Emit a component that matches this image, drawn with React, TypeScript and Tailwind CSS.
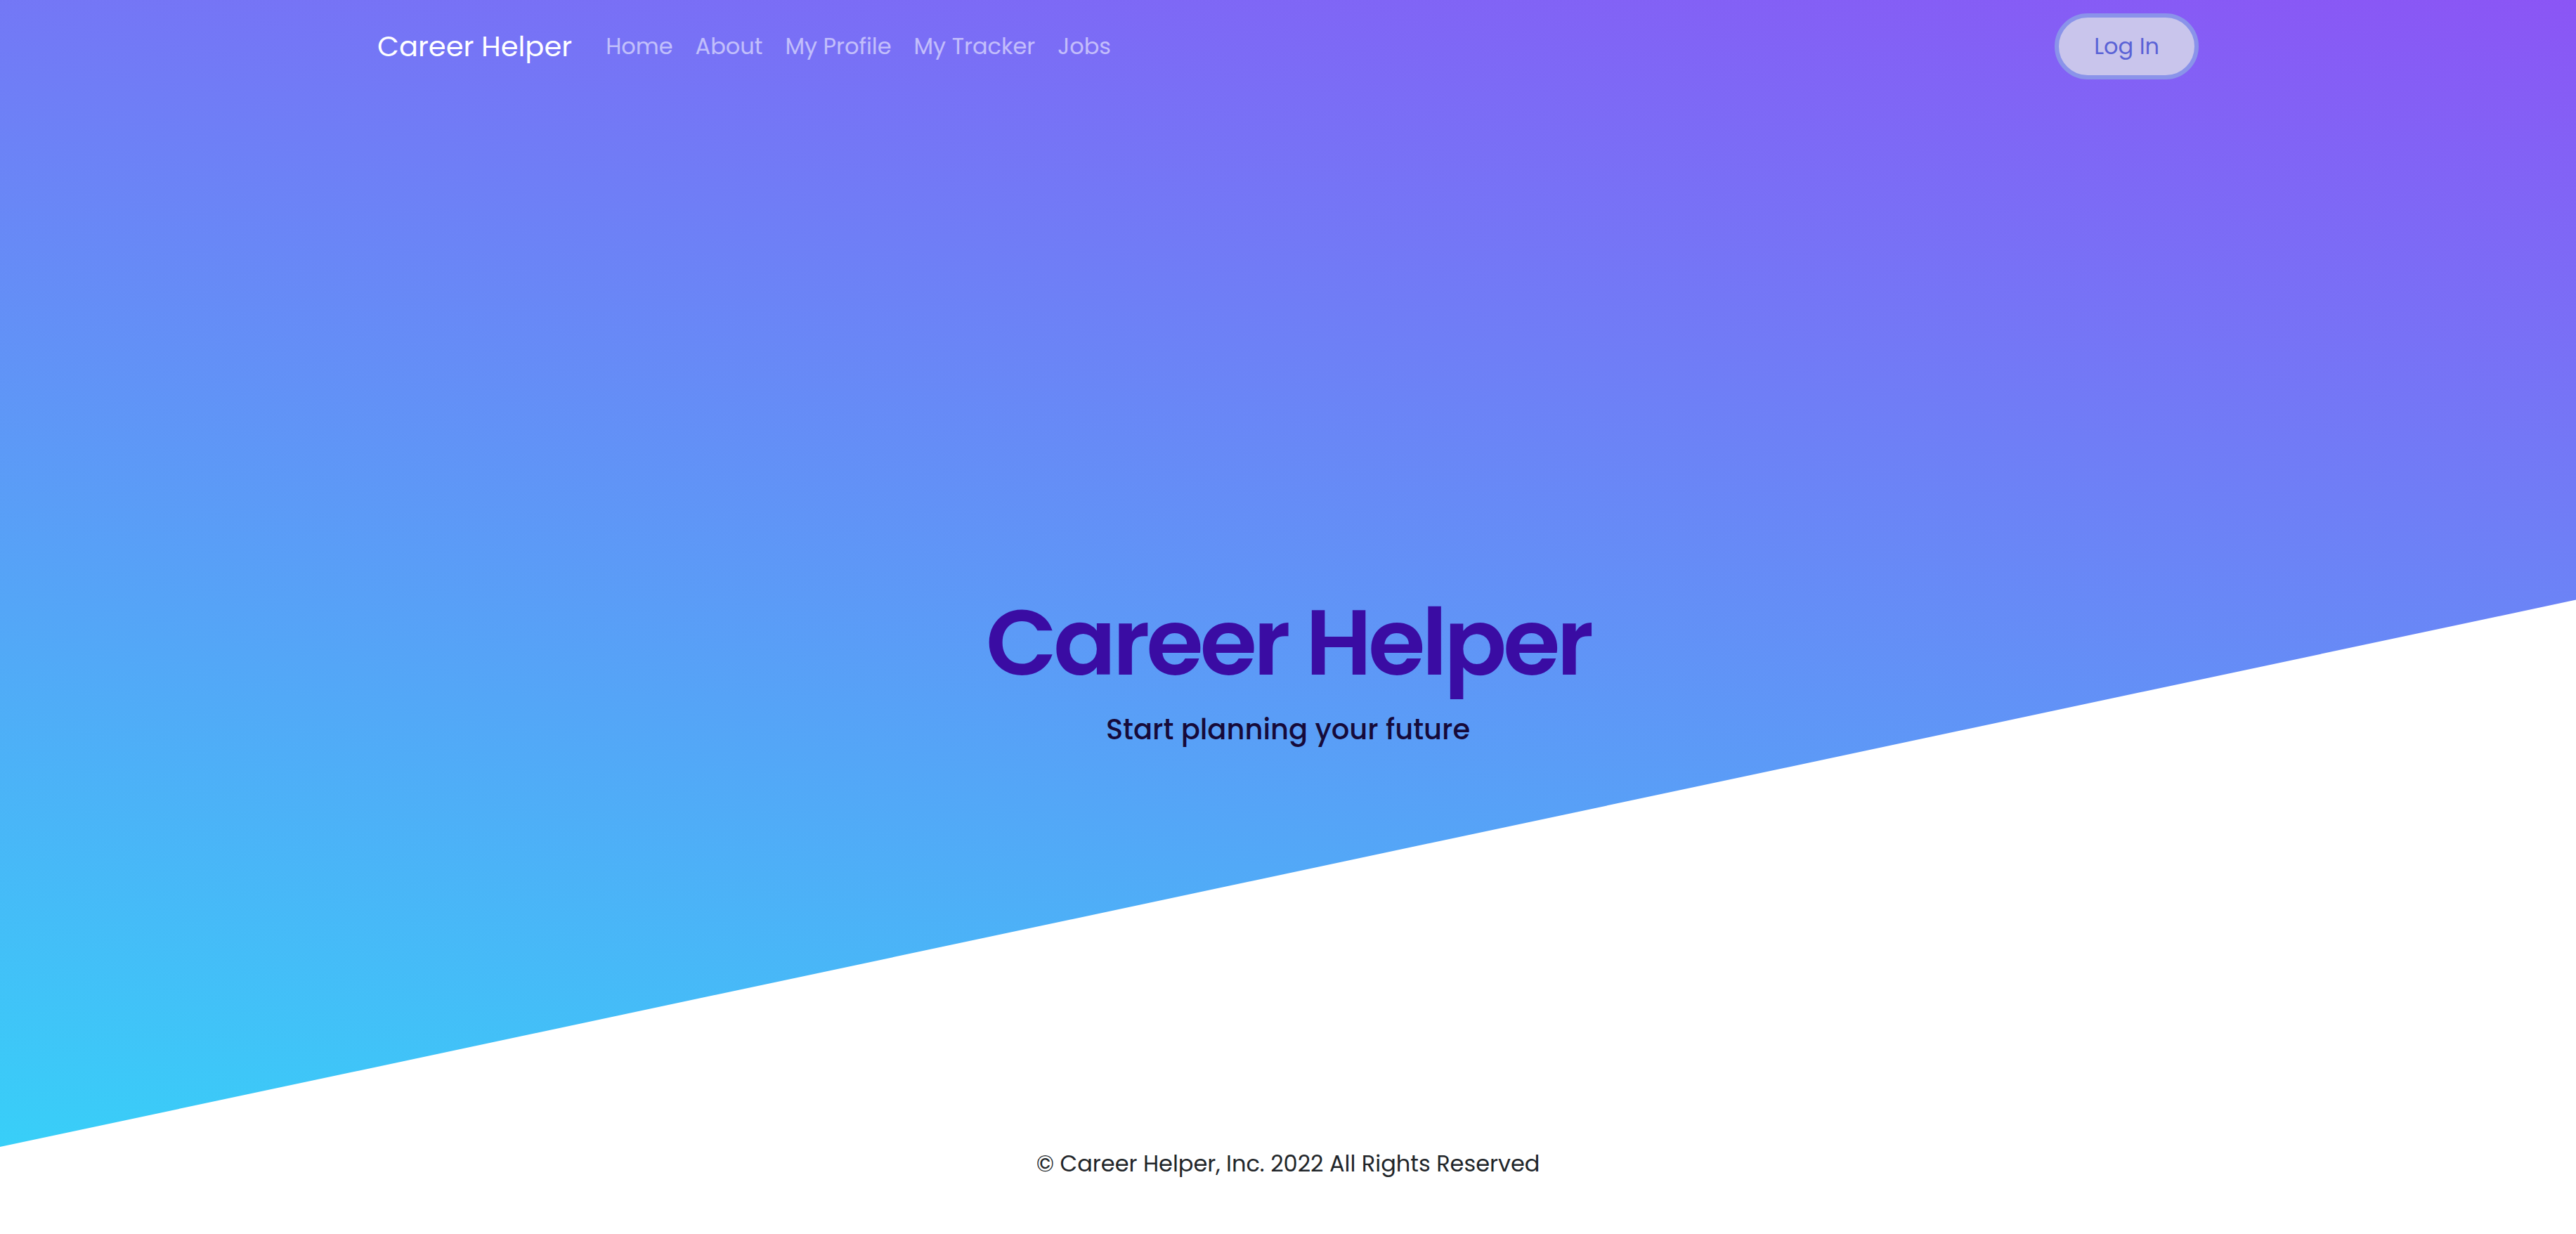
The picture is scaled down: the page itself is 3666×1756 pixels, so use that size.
const navLinks = ['Home', 'About', 'My Profile', 'My Tracker', 'Jobs'];

function Navbar() {
  return (
    <nav className="h-[132px] w-full">
      <div className="mx-auto flex h-full w-[2640px] items-center justify-between px-6">
        <div className="flex items-center">
          <a href="#" className="mr-8 text-[40px] leading-[1.5] text-white">
            Career Helper
          </a>
          <ul className="flex items-center">
            {navLinks.map((link) => (
              <li key={link}>
                <a href="#" className="block px-4 text-[32px] leading-[1.5] text-white/55 hover:text-white/75">
                  {link}
                </a>
              </li>
            ))}
          </ul>
        </div>
        <button className="rounded-full border-[6px] border-[#8a93ea] bg-[#c9c5ec] px-[50px] py-[17px] text-[32px] leading-[1.5] text-[#5a62d6]">
          Log In
        </button>
      </div>
    </nav>
  );
}

export default function App() {
  return (
    <div className="w-full bg-white font-['Poppins','Inter','Noto_Sans',sans-serif]">
      {/* Hero with slanted bottom edge */}
      <section className="flex h-[1632px] w-full flex-col bg-[linear-gradient(10deg,#38cff8,#8b55f5)] [clip-path:polygon(0_0,100%_0,100%_52.3%,0_100%)]">
        <Navbar />
        <div className="mt-[703px] flex flex-col items-center text-center">
          <h1 className="text-[132px] font-semibold leading-[1.2] tracking-[-0.04em] text-[#3a0ca3]">Career Helper</h1>
          <p className="mt-[15px] text-[40px] font-medium leading-[1.5] text-[#160a3a]">
            Start planning your future
          </p>
        </div>
      </section>

      {/* Footer */}
      <footer className="h-[124px] w-full text-center">
        <p className="text-[32px] leading-[48px] text-[#212529]">
          © Career Helper, Inc. 2022 All Rights Reserved
        </p>
      </footer>
    </div>
  );
}
